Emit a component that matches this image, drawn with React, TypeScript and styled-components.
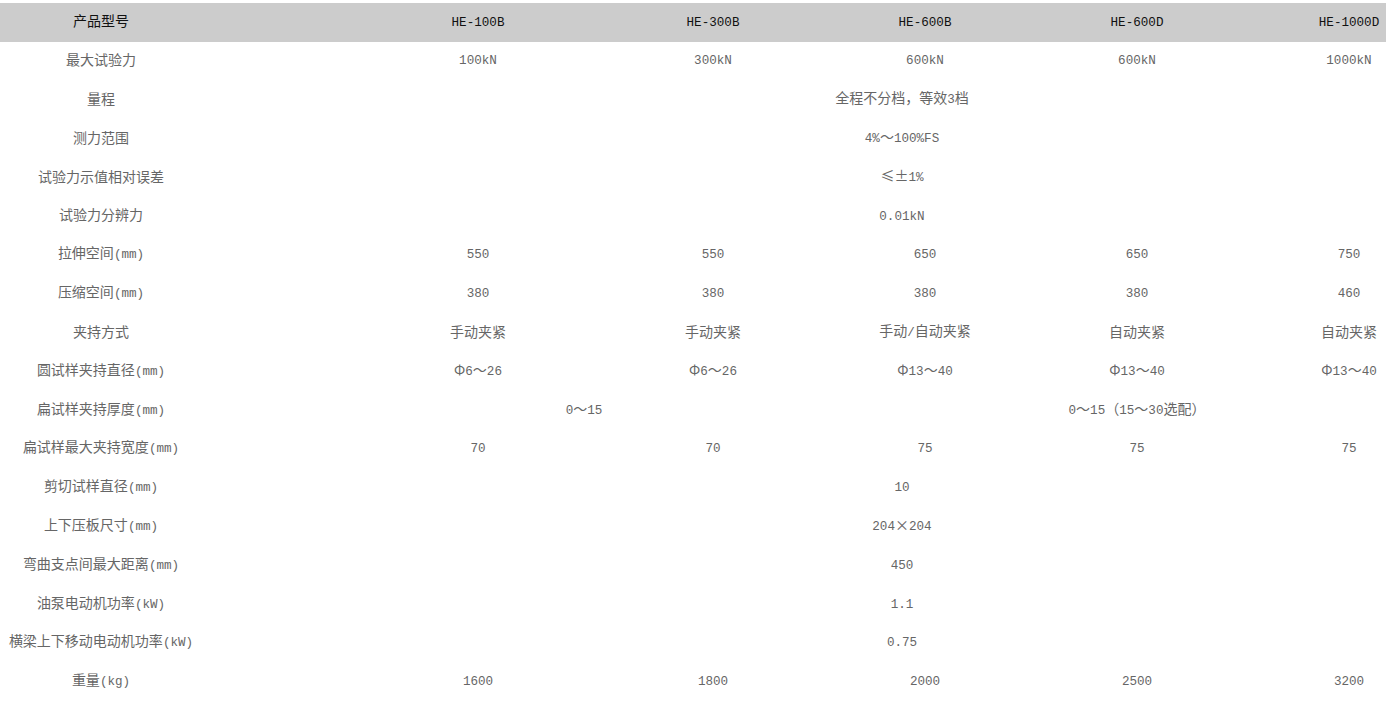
import React from "react";
import styled, { createGlobalStyle } from "styled-components";

const GlobalStyle = createGlobalStyle`
  html, body {
    margin: 0;
    padding: 0;
    overflow: hidden;
    background: #ffffff;
  }
  body {
    font-family: "Noto Sans CJK SC", "Liberation Mono", sans-serif;
  }
`;

const COLS = "202px 147px 258px 212px 212px 212px 212px";

const Page = styled.div`
  padding-top: 3px;
  width: 1455px;
`;

const Row = styled.div<{ $head?: boolean }>`
  display: grid;
  grid-template-columns: ${COLS};
  height: 38.8px;
  background: ${(p) => (p.$head ? "#cccccc" : "transparent")};
  color: ${(p) => (p.$head ? "#111111" : "#666666")};
`;

const Cell = styled.div<{ $start: number; $span: number }>`
  grid-column: ${(p) => p.$start} / span ${(p) => p.$span};
  display: flex;
  align-items: center;
  justify-content: center;
  padding-bottom: 4px;
  white-space: nowrap;
  font-size: 14px;
`;

const Content = styled.span`
  display: inline-block;
  line-height: 16px;
`;

const Latin = styled.span`
  font-family: "Liberation Mono", monospace;
  font-size: 12.6px;
  line-height: 1;
`;

function Text({ value }: { value: string }) {
  const parts = value.split(/([\u0020-\u007e]+)/).filter((s) => s.length > 0);
  return (
    <Content>
      {parts.map((p, i) =>
        /^[\u0020-\u007e]+$/.test(p) ? <Latin key={i}>{p}</Latin> : <React.Fragment key={i}>{p}</React.Fragment>
      )}
    </Content>
  );
}

type Val = string | [string, number];

const header = ["HE-100B", "HE-300B", "HE-600B", "HE-600D", "HE-1000D"];

const rows: { label: string; vals: Val[] }[] = [
  { label: "最大试验力", vals: ["100kN", "300kN", "600kN", "600kN", "1000kN"] },
  { label: "量程", vals: [["全程不分档，等效3档", 5]] },
  { label: "测力范围", vals: [["4%～100%FS", 5]] },
  { label: "试验力示值相对误差", vals: [["≤±1%", 5]] },
  { label: "试验力分辨力", vals: [["0.01kN", 5]] },
  { label: "拉伸空间(mm)", vals: ["550", "550", "650", "650", "750"] },
  { label: "压缩空间(mm)", vals: ["380", "380", "380", "380", "460"] },
  { label: "夹持方式", vals: ["手动夹紧", "手动夹紧", "手动/自动夹紧", "自动夹紧", "自动夹紧"] },
  { label: "圆试样夹持直径(mm)", vals: ["Φ6～26", "Φ6～26", "Φ13～40", "Φ13～40", "Φ13～40"] },
  { label: "扁试样夹持厚度(mm)", vals: [["0～15", 2], ["0～15（15～30选配）", 3]] },
  { label: "扁试样最大夹持宽度(mm)", vals: ["70", "70", "75", "75", "75"] },
  { label: "剪切试样直径(mm)", vals: [["10", 5]] },
  { label: "上下压板尺寸(mm)", vals: [["204×204", 5]] },
  { label: "弯曲支点间最大距离(mm)", vals: [["450", 5]] },
  { label: "油泵电动机功率(kW)", vals: [["1.1", 5]] },
  { label: "横梁上下移动电动机功率(kW)", vals: [["0.75", 5]] },
  { label: "重量(kg)", vals: ["1600", "1800", "2000", "2500", "3200"] },
];

function ValueCells({ vals }: { vals: Val[] }) {
  let col = 3;
  return (
    <>
      {vals.map((v, i) => {
        const [text, span] = typeof v === "string" ? [v, 1] : v;
        const start = col;
        col += span;
        return (
          <Cell key={i} $start={start} $span={span}>
            <Text value={text} />
          </Cell>
        );
      })}
    </>
  );
}

export default function App() {
  return (
    <>
      <GlobalStyle />
      <Page>
        <Row $head>
          <Cell $start={1} $span={1}>
            <Text value="产品型号" />
          </Cell>
          <ValueCells vals={header} />
        </Row>
        {rows.map((r) => (
          <Row key={r.label}>
            <Cell $start={1} $span={1}>
              <Text value={r.label} />
            </Cell>
            <ValueCells vals={r.vals} />
          </Row>
        ))}
      </Page>
    </>
  );
}
